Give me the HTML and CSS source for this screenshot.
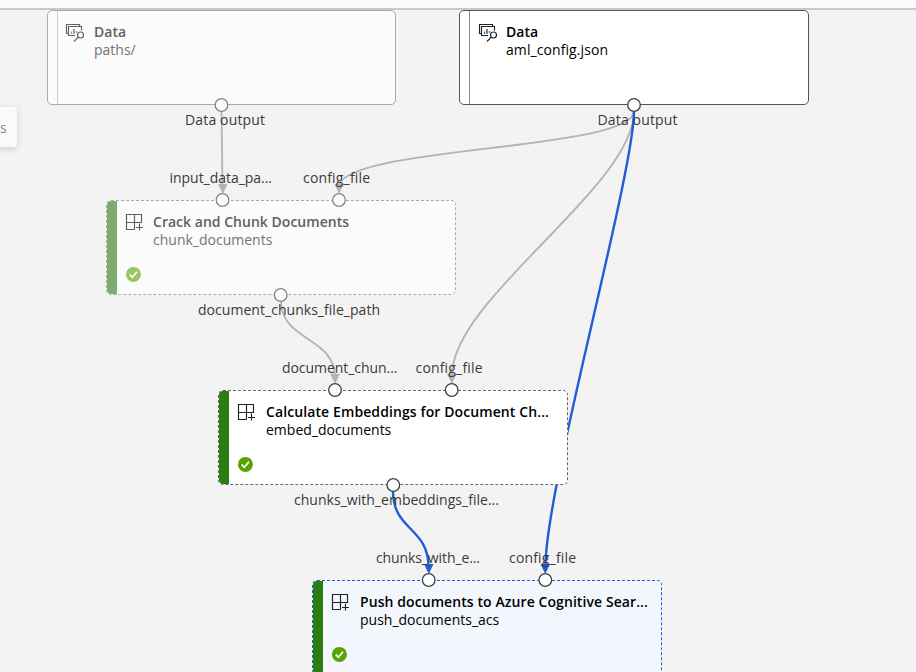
FILE: index.html
```
<!DOCTYPE html>
<html lang="en">
<head>
<meta charset="utf-8">
<title>Pipeline graph</title>
<link rel="stylesheet" href="styles.css">
</head>
<body>
<main class="canvas">
  <div class="topbar"></div>
  <svg class="layer" width="916" height="672" viewBox="0 0 916 672">
    <defs>
      <symbol id="i-data" viewBox="0 0 20 20">
        <path class="ln" d="M3 10.500H1.500V1.500h13V3"/>
        <path class="ln" d="M10 12.500H3.500v-9h13v4"/>
        <path class="bar" d="M6.500 8.500v2.500M11.500 8v2"/>
        <path class="bar2" d="M9 6v5"/>
        <circle class="ln" cx="15.500" cy="12" r="3"/>
        <path class="ln" d="M13.400 14.200L9 18.500"/>
      </symbol>
      <symbol id="i-comp" viewBox="0 0 18 18">
        <path class="ln" d="M9.500 16.500h-8v-15h15v8h-15M9.500 1.500v15M14.500 10.500v7M11 14.500h7"/>
      </symbol>
      <symbol id="i-ok" viewBox="0 0 16 16">
        <circle cx="8.400" cy="8.400" r="7.500" fill="#57a300"/>
        <path d="M4.700 8.600l2.600 2.600 4.700-5.400" fill="none" stroke="#fff" stroke-width="1.700"/>
      </symbol>
    </defs>
    <g class="edges">
      <path d="M221.500 111L222.500 186"/>
      <path d="M634 111C634 151 339 146 339 187"/>
      <path d="M634 111C634 187 452 299 452 375"/>
      <path d="M281 301C281 341 335 337 335 377"/>
      <path class="on" d="M634 111C634 174 545.500 488 545.500 566"/>
      <path class="on" d="M393 491C393 531 428.500 527 428.500 567"/>
    </g>
    <g class="heads">
      <path d="M218 184h9.500l-4.700 10z"/><path d="M334.300 184h9.500l-4.700 10z"/>
      <path d="M330.300 374h9.500l-4.700 10z"/><path d="M447 374h9.500l-4.700 10z"/>
      <path class="on" d="M424 564h9.500l-4.700 10z"/><path class="on" d="M540.500 564h9.500l-4.700 10z"/>
    </g>
  </svg>

  <article class="node data faded n1">
    <i class="rail"></i>
    <svg class="icon" width="20" height="20"><use href="#i-data"/></svg>
    <div class="info"><h2>Data</h2><p>paths/</p></div>
  </article>
  <article class="node data n2">
    <i class="rail"></i>
    <svg class="icon" width="20" height="20"><use href="#i-data"/></svg>
    <div class="info"><h2>Data</h2><p>aml_config.json</p></div>
  </article>
  <article class="node step faded n3">
    <i class="rail"></i>
    <svg class="icon" width="18" height="18"><use href="#i-comp"/></svg>
    <div class="info"><h2>Crack and Chunk Documents</h2><p>chunk_documents</p></div>
    <svg class="ok" width="16" height="16"><use href="#i-ok"/></svg>
  </article>
  <article class="node step n4">
    <i class="rail"></i>
    <svg class="icon" width="18" height="18"><use href="#i-comp"/></svg>
    <div class="info"><h2>Calculate Embeddings for Document Ch...</h2><p>embed_documents</p></div>
    <svg class="ok" width="16" height="16"><use href="#i-ok"/></svg>
  </article>
  <article class="node step selected n5">
    <i class="rail"></i>
    <svg class="icon" width="18" height="18"><use href="#i-comp"/></svg>
    <div class="info"><h2>Push documents to Azure Cognitive Sear...</h2><p>push_documents_acs</p></div>
    <svg class="ok" width="16" height="16"><use href="#i-ok"/></svg>
  </article>

  <svg class="layer" width="916" height="672" viewBox="0 0 916 672">
    <g class="ports">
      <g class="dim">
        <circle cx="221.500" cy="105" r="6.300"/><circle cx="222.500" cy="200" r="6.300"/>
        <circle cx="339" cy="200" r="6.300"/><circle cx="280.700" cy="295" r="6.300"/>
      </g>
      <circle cx="634" cy="105" r="6.300"/><circle cx="335" cy="390" r="6.300"/>
      <circle cx="451.700" cy="390" r="6.300"/><circle cx="393.300" cy="485" r="6.300"/>
      <circle cx="428.700" cy="580" r="6.300"/><circle cx="545.300" cy="580" r="6.300"/>
    </g>
    <g class="labels">
      <text x="185" y="125" textLength="80">Data output</text>
      <text x="597.500" y="125" textLength="80">Data output</text>
      <text x="169.500" y="183" textLength="102.500">input_data_pa...</text>
      <text x="303" y="183" textLength="67">config_file</text>
      <text x="198" y="315" textLength="182">document_chunks_file_path</text>
      <text x="282" y="373" textLength="115.500">document_chun...</text>
      <text x="415.500" y="373" textLength="67">config_file</text>
      <text x="294" y="505" textLength="205">chunks_with_embeddings_file...</text>
      <text x="376" y="563" textLength="104">chunks_with_e...</text>
      <text x="509" y="563" textLength="67">config_file</text>
    </g>
  </svg>
  <aside class="tip">s</aside>
</main>
</body>
</html>
```

FILE: styles.css
```
* { box-sizing: border-box; }
body { margin: 0; font: 14px/18px "Open Sans", "Noto Sans", sans-serif; }
.canvas { position: relative; width: 916px; height: 672px; overflow: hidden; background: #f3f3f3; }
.topbar { height: 10px; background: #fafafa; border-bottom: 2px solid #c8c8c8; }
.layer { position: absolute; left: 0; top: 0; }
.edges path { fill: none; stroke: #b3b3b3; stroke-width: 1.8; }
.edges .on { stroke: #205ed9; stroke-width: 2.4; }
.heads path { fill: #b3b3b3; }
.heads .on { fill: #205ed9; }
.ports circle { fill: #fff; stroke: #424242; stroke-width: 1.3; }
.ports .dim circle { fill: #fbfbfb; stroke: #858585; }
.labels text { font-size: 14px; fill: #3b3a39; }

.node { position: absolute; width: 350px; height: 95px; display: grid; grid-template-rows: 65px 28px; background: #fff; border: 1px solid #555; border-radius: 5px; overflow: hidden; color: #000; }
.data { grid-template-columns: 10px 36px 1fr; }
.step { grid-template-columns: 10px 36px 1fr; border: 1px dashed #666; }
.rail { grid-row: 1 / 3; height: 93px; }
.data .rail { border-right: 1px solid #888; }
.step .rail { background: #2d7d12; border-radius: 3px 0 0 3px; }
.icon { grid-column: 2; grid-row: 1; margin: 12px 0 0 8px; }
.info { grid-column: 3; grid-row: 1; margin-top: 12px; white-space: nowrap; }
.info h2, .info p { margin: 0; font-size: 14px; line-height: 18px; }
.info h2 { font-weight: 600; }
.ok { grid-column: 2; grid-row: 2; margin-left: 8px; }
.ln { fill: none; stroke: #222; stroke-width: 1.15; }
.bar { fill: none; stroke: #1686c5; stroke-width: 1.3; }
.bar2 { fill: none; stroke: #273b8c; stroke-width: 1.3; }
.faded { background: #fbfbfb; border-color: #aaa; color: #666; }
.faded .icon { opacity: .7; }
.faded .info h2 { color: #606060; }
.faded .info p { color: #737373; }
.data.faded .icon { filter: grayscale(1); }
.data.faded .rail { border-color: #ccc; }
.step.faded .rail { background: #7dad6e; }
.faded .ok { opacity: .6; }
.selected { background: #f3f7fd; border-color: #205ed9; }
.n1 { left: 47px; top: 10px; width: 349px; }
.n1 .icon { margin-left: 7px; }
.n2 { left: 459px; top: 10px; }
.n3 { left: 106px; top: 200px; }
.n4 { left: 218px; top: 390px; }
.n5 { left: 312px; top: 580px; }
.n4 .info, .n5 .info { margin-left: 1px; }
.n2 p { letter-spacing: .08px; }
.n3 h2 { letter-spacing: .02px; }
.n4 h2 { letter-spacing: .1px; }
.n5 h2 { letter-spacing: .08px; }
.tip { position: absolute; left: -10px; top: 107px; width: 27px; height: 40px; padding: 12px 0 0 10px; border-radius: 3px; background: #fafafa; color: #888; box-shadow: 0 2px 6px rgba(0,0,0,.15); }
```
